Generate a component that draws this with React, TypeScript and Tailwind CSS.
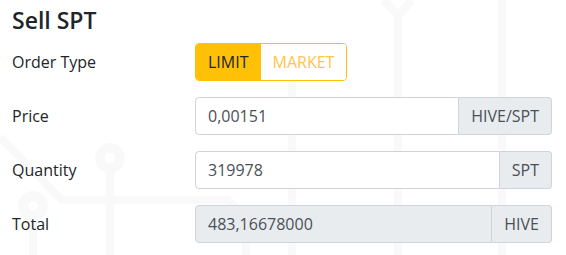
const font = { fontFamily: '"Open Sans", "Liberation Sans", sans-serif' }

const Backdrop = () => (
  <svg
    className="pointer-events-none absolute inset-0 h-full w-full"
    viewBox="0 0 566 255"
    fill="none"
    stroke="#f9f9f9"
    strokeWidth="8"
  >
    <path d="M0 137 L62 200 L228 200 L246 218 L246 255" />
    <circle cx="110" cy="158" r="10" strokeWidth="10" />
    <path d="M110 170 L110 255" />
    <circle cx="33" cy="206" r="10" strokeWidth="10" />
    <path d="M33 218 L33 255" />
    <circle cx="288" cy="56" r="8" strokeWidth="9" />
    <path d="M292 64 L292 255" />
    <path d="M384 0 L398 16 L412 0 M398 16 L398 255" />
    <path d="M502 0 L502 255" />
  </svg>
)

type FieldProps = {
  label: string
  value: string
  unit: string
  disabled?: boolean
}

const Field = ({ label, value, unit, disabled }: FieldProps) => (
  <div className="mb-4 flex h-[38px] items-center">
    <label className="w-[183px] shrink-0 text-[16px] text-[#212529]">{label}</label>
    <div className="flex h-full flex-1">
      <div
        className={`flex flex-1 items-center rounded-l-[4px] border border-[#ced4da] px-3 text-[16px] text-[#495057] ${
          disabled ? 'bg-[#e9ecef]' : 'bg-white'
        }`}
      >
        {value}
      </div>
      <div className="flex items-center rounded-r-[4px] border border-l-0 border-[#ced4da] bg-[#e9ecef] px-3 text-[16px] text-[#495057]">
        {unit}
      </div>
    </div>
  </div>
)

export default function App() {
  return (
    <div className="relative h-[255px] w-[566px] overflow-hidden bg-white" style={font}>
      <Backdrop />
      <div className="relative pl-3 pr-[14px] pt-[6px]">
        <h4 className="mb-[9px] text-[23px] font-semibold leading-[28px] text-[#212529]">Sell SPT</h4>

        <div className="mb-4 flex h-[38px] items-center">
          <span className="w-[183px] shrink-0 text-[16px] text-[#212529]">Order Type</span>
          <div className="flex h-full overflow-hidden rounded-[4px] border border-[#ffc107]">
            <button className="bg-[#ffc107] px-3 text-[16px] text-[#212529]">LIMIT</button>
            <button className="bg-white px-3 text-[16px] text-[#ffc44d]">MARKET</button>
          </div>
        </div>

        <Field label="Price" value="0,00151" unit="HIVE/SPT" />
        <Field label="Quantity" value="319978" unit="SPT" />
        <Field label="Total" value="483,16678000" unit="HIVE" disabled />
      </div>
    </div>
  )
}
